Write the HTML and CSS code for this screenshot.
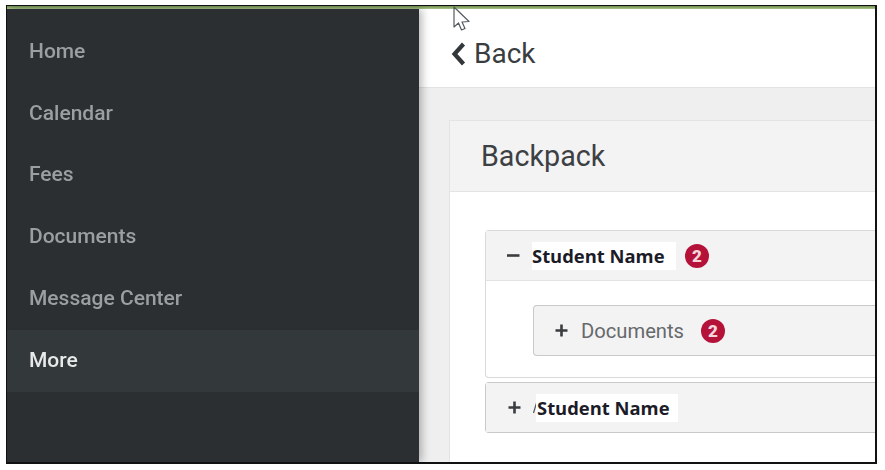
FILE: index.html
```html
<!DOCTYPE html>
<html lang="en">
<head>
<meta charset="utf-8">
<title>Backpack</title>
<link rel="stylesheet" href="styles.css">
</head>
<body>
<div class="frame">
  <div class="accent"></div>
  <div class="app">
    <nav class="sidebar">
      <a class="nav-item">Home</a>
      <a class="nav-item">Calendar</a>
      <a class="nav-item">Fees</a>
      <a class="nav-item">Documents</a>
      <a class="nav-item">Message Center</a>
      <a class="nav-item active">More</a>
    </nav>
    <main class="main">
      <header class="topbar">
        <svg class="chevron" width="16" height="26" viewBox="0 0 16 26"><path d="M13.500 3 L4.500 13 L13.500 23" fill="none" stroke="#33373a" stroke-width="4.200"/></svg>
        <span class="back">Back</span>
      </header>
      <div class="content">
        <section class="panel">
          <h1 class="panel-title">Backpack</h1>
          <div class="panel-body">
            <div class="acc acc-open">
              <div class="acc-head">
                <svg class="sign" width="13" height="13" viewBox="0 0 13 13"><path d="M0 6.500 H12.500" stroke="#3a3d40" stroke-width="2.600"/></svg>
                <span class="student">Student Name</span>
                <span class="badge">2</span>
              </div>
              <div class="acc-body">
                <div class="sub-row">
                  <svg class="sign" width="13" height="13" viewBox="0 0 13 13"><path d="M0.500 6.500 H12.500 M6.500 0.500 V12.500" stroke="#3a3d40" stroke-width="2.600"/></svg>
                  <span class="sub-label">Documents</span>
                  <span class="badge">2</span>
                </div>
              </div>
            </div>
            <div class="acc acc-closed">
              <div class="acc-head">
                <svg class="sign" width="13" height="13" viewBox="0 0 13 13"><path d="M0.500 6.500 H12.500 M6.500 0.500 V12.500" stroke="#3a3d40" stroke-width="2.600"/></svg>
                <svg class="sliver" width="4" height="12" viewBox="0 0 4 12"><path d="M3.500 1 L0.500 11" stroke="#55585b" stroke-width="1.200"/></svg>
                <span class="student student-second">Student Name</span>
              </div>
            </div>
          </div>
        </section>
      </div>
    </main>
  </div>
  <svg class="cursor" width="20" height="28" viewBox="0 0 20 28"><path d="M2 1 L2 21 L6.500 17 L9.500 24 L13 22.500 L10 16 L17 15.500 Z" fill="#fff" stroke="#555b5e" stroke-width="1.200" stroke-linejoin="round"/></svg>
</div>
</body>
</html>
```

FILE: styles.css
```css
* { box-sizing: border-box; }

html, body { height: 100%; }

body {
  margin: 0;
  padding: 5px 8px 6px 6px;
  background: #fff;
  font-family: Roboto, "Liberation Sans", sans-serif;
  overflow: hidden;
}

.frame {
  position: relative;
  display: flex;
  flex-direction: column;
  height: 459px;
  border: solid #111;
  border-width: 1.5px 2px 2px 1.5px;
  overflow: hidden;
  background: #fff;
}

.accent {
  flex: none;
  height: 3px;
  background: linear-gradient(#6f8f4d, #a9c48a);
}

.app {
  flex: 1;
  display: flex;
  min-height: 0;
  filter: blur(0.4px);
}

.sidebar {
  flex: none;
  width: 412px;
  padding-top: 12px;
  background: #2b2f32;
  box-shadow: 3px 0 8px rgba(0, 0, 0, 0.28);
  position: relative;
  z-index: 1;
}

.nav-item {
  display: flex;
  align-items: center;
  height: 61.75px;
  padding: 0 0 2px 22px;
  font-size: 21px;
  font-weight: 500;
  color: #9b9fa1;
}

.nav-item.active {
  background: #33383b;
  color: #e8e9e9;
}

.main {
  flex: 1;
  min-width: 0;
  display: flex;
  flex-direction: column;
}

.topbar {
  flex: none;
  display: flex;
  align-items: center;
  gap: 8px;
  height: 79px;
  padding: 11px 0 0 31px;
  background: #fff;
  border-bottom: 1px solid #e3e3e3;
}

.back {
  font-size: 28px;
  color: #3a3d40;
}

.content {
  flex: 1;
  padding: 32px 0 0 30px;
  background: #efefef;
  min-height: 0;
}

.panel {
  height: 100%;
  background: #fff;
  border: solid #e4e4e4;
  border-width: 1px 0 0 1px;
}

.panel-title {
  margin: 0;
  height: 71px;
  display: flex;
  align-items: center;
  padding-left: 31px;
  font-size: 28.7px;
  font-weight: 400;
  color: #3d4043;
  background: #f3f3f3;
  border-bottom: 1px solid #e4e4e4;
}

.panel-body {
  padding: 38px 0 0 35px;
}

.acc {
  border: solid #d9d9d9;
  border-width: 1px 0 1px 1px;
  border-radius: 4px 0 0 4px;
  background: #fff;
}

.acc-open { height: 148px; }

.acc-closed {
  margin-top: 4px;
  border-color: #c9c9c9;
  background: #f3f3f3;
}

.acc-head {
  display: flex;
  align-items: center;
  height: 50px;
  padding-left: 21px;
  background: #f3f3f3;
}

.acc-closed .acc-head { height: 49px; }

.acc-open .acc-head { border-bottom: 1px solid #e2e2e2; }

.sign {
  flex: none;
  margin-right: 12px;
}

.acc-closed .sign { margin-left: 1px; }

.sliver {
  flex: none;
  margin-right: -1px;
}

.student {
  display: flex;
  align-items: center;
  height: 28px;
  width: 144px;
  font-family: "Open Sans", sans-serif;
  font-size: 18.4px;
  font-weight: 700;
  color: #1c1c28;
  background: #fff;
}

.student-second {
  width: 142px;
  padding-left: 1px;
}

.badge {
  flex: none;
  display: flex;
  align-items: center;
  justify-content: center;
  width: 24px;
  height: 24px;
  margin-left: 9px;
  border-radius: 50%;
  background: #b5123a;
  color: #f3d5dc;
  font-size: 17px;
  font-weight: 900;
}

.acc-body {
  padding: 24px 0 0 47px;
}

.sub-row {
  display: flex;
  align-items: center;
  height: 51px;
  padding-left: 21px;
  background: #f3f3f3;
  border: solid #c9c9c9;
  border-width: 1px 0 1px 1px;
  border-radius: 4px 0 0 4px;
}

.sub-row .sign { margin-right: 13px; }

.sub-label {
  font-size: 20.2px;
  color: #66696c;
  margin-right: 17px;
}

.sub-row .badge { margin-left: 0; }

.cursor {
  position: absolute;
  left: 445px;
  top: 0;
  z-index: 2;
}
```
